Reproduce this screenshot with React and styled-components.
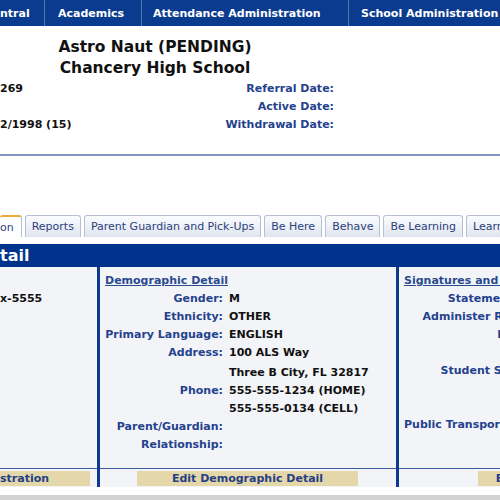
import React from "react";
import styled, { createGlobalStyle } from "styled-components";

const Global = createGlobalStyle`
  html, body {
    margin: 0;
    padding: 0;
    background: #ffffff;
    overflow: hidden;
  }
  body {
    font-family: "DejaVu Sans", Verdana, sans-serif;
    font-size: 11px;
    color: #111111;
  }
`;

const Page = styled.div`
  width: 500px;
  overflow: hidden;
`;

const Nav = styled.div`
  display: flex;
  height: 26px;
  background: #0b3b8e;
  white-space: nowrap;
`;

const NavItem = styled.div`
  flex: none;
  width: ${(p) => p.w}px;
  padding-left: ${(p) => p.pl}px;
  box-sizing: border-box;
  display: flex;
  align-items: center;
  color: #ffffff;
  font-weight: bold;
  font-size: 11px;
  border-right: 1px solid #5676b3;
`;

const Title = styled.div`
  width: 310px;
  padding-top: 11px;
  text-align: center;
  font-size: 15.5px;
  font-weight: bold;
  line-height: 21px;
  color: #111111;
`;

const Info = styled.div`
  display: grid;
  grid-template-columns: 200px 134px 1fr;
  line-height: 18px;
  font-weight: bold;
  padding-top: 1px;
  padding-bottom: 20px;
  border-bottom: 2px solid #8196c0;
`;

const Value = styled.div`
  white-space: nowrap;
  color: #111111;
  font-weight: bold;
`;

const Label = styled.div`
  text-align: right;
  white-space: nowrap;
  color: #24428d;
  font-weight: bold;
`;

const Tabs = styled.div`
  display: flex;
  gap: 3px;
  margin-top: 59px;
  height: 22px;
  align-items: flex-end;
  white-space: nowrap;
`;

const Tab = styled.div`
  flex: none;
  height: ${(p) => (p.active ? 20 : 21)}px;
  line-height: 21px;
  padding: ${(p) => (p.active ? "0 7px 0 0" : "0 6px")};
  border: 1px solid #b7bfd4;
  border-top: ${(p) => (p.active ? "2px solid #efa93a" : "1px solid #b7bfd4")};
  border-left: ${(p) => (p.active ? "none" : "1px solid #b7bfd4")};
  border-bottom: none;
  border-radius: 3px 3px 0 0;
  background: ${(p) =>
    p.active ? "#ffffff" : "linear-gradient(#fbfcfe, #dfe4ef)"};
  color: #2c3f7c;
  font-size: 11px;
`;

const Bar = styled.div`
  margin-top: 7px;
  height: 23px;
  line-height: 23px;
  background: #00338c;
  color: #ffffff;
  font-size: 16px;
  font-weight: bold;
  white-space: nowrap;
`;

const Content = styled.div`
  display: grid;
  grid-template-columns: 97px 3px 296px 3px 1fr;
  grid-template-rows: 201px 19px;
  background: #f3f4f8;
`;

const Divider = styled.div`
  grid-row: 1 / 3;
  grid-column: ${(p) => p.col};
  background: #0d3a8e;
`;

const Column = styled.div`
  grid-row: 1;
  grid-column: ${(p) => p.col};
  padding-top: 5px;
  padding-left: ${(p) => p.pl}px;
  overflow: hidden;
  line-height: 18px;
`;

const Heading = styled.div`
  color: #2a4a8e;
  font-weight: bold;
  text-decoration: underline;
  white-space: nowrap;
`;

const Row = styled.div`
  display: grid;
  grid-template-columns: ${(p) => p.lw}px 1fr;
  column-gap: 6px;
  margin-top: ${(p) => p.mt || 0}px;
  min-height: 18px;
`;

const FootCell = styled.div`
  grid-row: 2;
  grid-column: ${(p) => p.col};
  border-top: 1px solid #3a5c9c;
  padding-top: 2px;
  padding-left: ${(p) => p.pl}px;
  overflow: hidden;
`;

const Button = styled.div`
  width: ${(p) => p.w}px;
  height: 15px;
  line-height: 15px;
  background: #e4d7a9;
  color: #243f86;
  font-weight: bold;
  font-size: 11px;
  text-align: ${(p) => p.align || "center"};
  white-space: nowrap;
`;

const Bottom = styled.div`
  margin-top: 8px;
  height: 10px;
  background: #d2d2d2;
`;

const navItems = [
  { label: "ntral", w: 45, pl: 0 },
  { label: "Academics", w: 97, pl: 13 },
  { label: "Attendance Administration", w: 207, pl: 11 },
  { label: "School Administration", w: 200, pl: 12 },
];

const tabs = [
  "Reports",
  "Parent Guardian and Pick-Ups",
  "Be Here",
  "Behave",
  "Be Learning",
  "Learning Plans",
];

const demo = [
  ["Gender:", "M"],
  ["Ethnicity:", "OTHER"],
  ["Primary Language:", "ENGLISH"],
  ["Address:", "100 ALS Way"],
  ["", "Three B City, FL 32817", 2],
  ["Phone:", "555-555-1234 (HOME)"],
  ["", "555-555-0134 (CELL)"],
  ["Parent/Guardian:", ""],
  ["Relationship:", ""],
];

const sigs = [
  "Statement Sig:",
  "Administer Reliefs:",
  "Result:",
  "",
  "Student Signed:",
  "",
  "",
  "Public Transportation:",
];

export default function App() {
  return (
    <Page>
      <Global />
      <Nav>
        {navItems.map((n) => (
          <NavItem key={n.label} w={n.w} pl={n.pl}>
            {n.label}
          </NavItem>
        ))}
      </Nav>

      <Title>
        <div>Astro Naut (PENDING)</div>
        <div>Chancery High School</div>
      </Title>

      <Info>
        <Value>269</Value>
        <Label>Referral Date:</Label>
        <Value />
        <Value />
        <Label>Active Date:</Label>
        <Value />
        <Value>2/1998 (15)</Value>
        <Label>Withdrawal Date:</Label>
        <Value />
      </Info>

      <Tabs>
        <Tab active>on</Tab>
        {tabs.map((t) => (
          <Tab key={t}>{t}</Tab>
        ))}
      </Tabs>

      <Bar>tail</Bar>

      <Content>
        <Column col={1} pl={0}>
          <Row lw={0} />
          <Value>x-5555</Value>
        </Column>
        <Divider col={2} />
        <Column col={3} pl={5}>
          <Heading>Demographic Detail</Heading>
          {demo.map(([l, v, mt], i) => (
            <Row key={i} lw={118} mt={mt}>
              <Label>{l}</Label>
              <Value>{v}</Value>
            </Row>
          ))}
        </Column>
        <Divider col={4} />
        <Column col={5} pl={5}>
          <Heading>Signatures and Acknowledgements</Heading>
          {sigs.map((l, i) => (
            <Row key={i} lw={137}>
              <Label>{l}</Label>
              <Value />
            </Row>
          ))}
        </Column>

        <FootCell col={1} pl={0}>
          <Button w={90} align="left">
            stration
          </Button>
        </FootCell>
        <FootCell col={3} pl={37}>
          <Button w={221}>Edit Demographic Detail</Button>
        </FootCell>
        <FootCell col={5} pl={79}>
          <Button w={60}>Edit</Button>
        </FootCell>
      </Content>

      <Bottom />
    </Page>
  );
}
